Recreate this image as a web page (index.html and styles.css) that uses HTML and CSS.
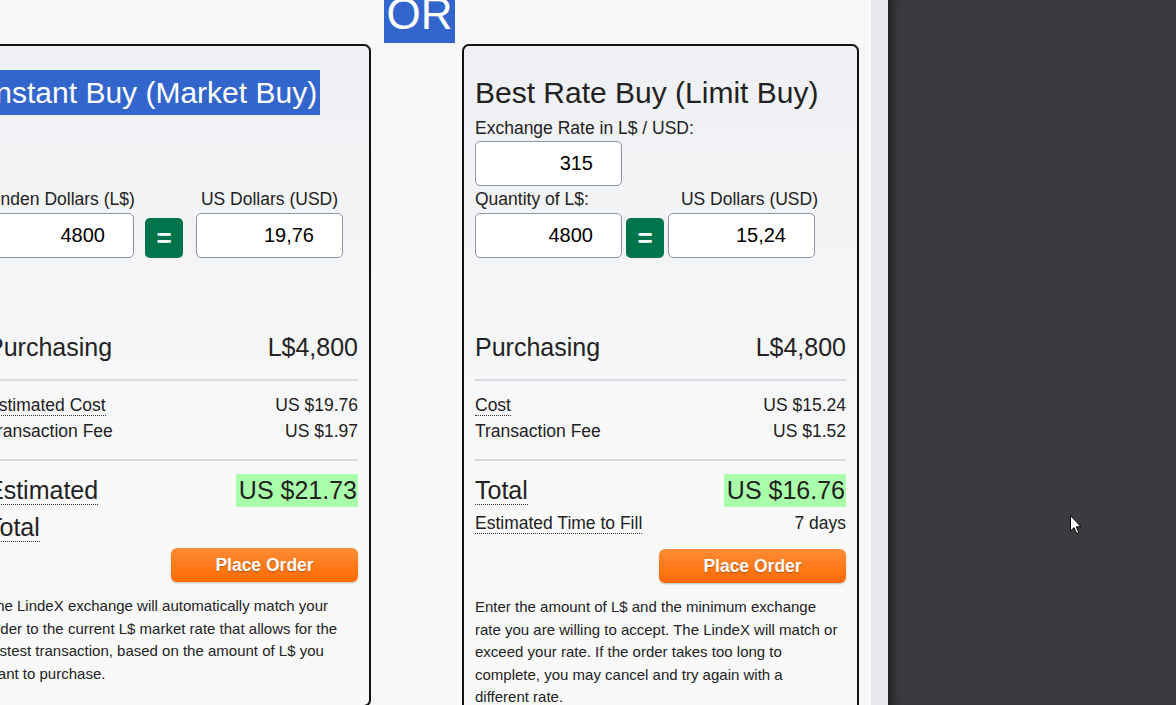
FILE: index.html
```html
<!DOCTYPE html>
<html lang="en">
<head>
  <meta charset="UTF-8" />
  <meta name="viewport" content="width=device-width, initial-scale=1" />
  <title>Buy L$ - LindeX</title>
  <link rel="stylesheet" href="styles.css">
</head>
<body>
  <div class="page">
    <div class="exchange">
      <div class="card card-market">
        <h2><span class="selected">Instant Buy (Market Buy)</span></h2>
        <div class="spacer"></div>
        <div class="field-labels centered">
          <span>Linden Dollars (L$)</span>
          <span></span>
          <span>US Dollars (USD)</span>
        </div>
        <div class="fields">
          <input class="amount" type="text" value="4800">
          <button class="equal">=</button>
          <input class="amount" type="text" value="19,76">
        </div>

        <div class="summary">
          <div class="row row-lg">
            <span>Purchasing</span>
            <span>L$4,800</span>
          </div>
          <div class="divider"></div>
          <div class="row">
            <span><span class="term">Estimated Cost</span></span>
            <span>US $19.76</span>
          </div>
          <div class="row">
            <span>Transaction Fee</span>
            <span>US $1.97</span>
          </div>
          <div class="divider"></div>
          <div class="row row-lg row-total">
            <span class="total-label"><span class="term">Estimated Total</span></span>
            <span class="total-value">US $21.73</span>
          </div>
        </div>
        <button class="place-order">Place Order</button>
        <p class="note">The LindeX exchange will automatically match your order to the current L$ market rate that allows for the fastest transaction, based on the amount of L$ you want to purchase.</p>
      </div>

      <div class="or-col">
        <div class="or">OR</div>
      </div>

      <div class="card card-limit">
        <h2>Best Rate Buy (Limit Buy)</h2>
        <div class="label">Exchange Rate in L$ / USD:</div>
        <input class="amount" type="text" value="315">
        <div class="field-labels spread">
          <span>Quantity of L$:</span>
          <span>US Dollars (USD)</span>
        </div>
        <div class="fields">
          <input class="amount" type="text" value="4800">
          <button class="equal">=</button>
          <input class="amount" type="text" value="15,24">
        </div>

        <div class="summary">
          <div class="row row-lg">
            <span>Purchasing</span>
            <span>L$4,800</span>
          </div>
          <div class="divider"></div>
          <div class="row">
            <span><span class="term">Cost</span></span>
            <span>US $15.24</span>
          </div>
          <div class="row">
            <span>Transaction Fee</span>
            <span>US $1.52</span>
          </div>
          <div class="divider"></div>
          <div class="row row-lg">
            <span><span class="term">Total</span></span>
            <span class="total-value">US $16.76</span>
          </div>
          <div class="row row-fill">
            <span><span class="term">Estimated Time to Fill</span></span>
            <span>7 days</span>
          </div>
        </div>
        <button class="place-order">Place Order</button>
        <p class="note">Enter the amount of L$ and the minimum exchange rate you are willing to accept. The LindeX will match or exceed your rate. If the order takes too long to complete, you may cancel and try again with a different rate.</p>
      </div>
    </div>
  </div>
  <div class="track"></div>
  <div class="shade"></div>

  <svg class="cursor" width="13" height="20" viewBox="0 0 13 20">
    <path d="M0.5 0.5 L0.5 16 L4 12.6 L6.6 18.6 L8.8 17.6 L6.3 11.8 L11 11.8 Z" fill="#fff" stroke="#000" stroke-width="1"/>
  </svg>
</body>
</html>
```

FILE: styles.css
```css
* {
  box-sizing: border-box;
}
body {
  margin: 0;
  height: 100vh;
  overflow: hidden;
  display: flex;
  position: relative;
  font-family: 'Liberation Sans', Arial, sans-serif;
  color: #222;
}
.page {
  width: 871px;
  flex: none;
  background: #f7f7f7;
  overflow: hidden;
}
.track {
  width: 17px;
  flex: none;
  background: #e8e8ec;
}
.shade {
  flex: 1;
  background: #3a3b3e;
  box-shadow: inset 10px 0 10px -6px rgba(0,0,0,0.5);
}
.exchange {
  display: flex;
  align-items: flex-start;
  margin-left: -26px;
}
.card {
  width: 397px;
  flex: none;
  margin-top: 44px;
  padding: 11px 11px 20px;
  border: 2px solid #111;
  border-radius: 7px;
  background: linear-gradient(#eff0f3, #f9f9fa 65%);
}
.or-col {
  width: 91px;
  flex: none;
  padding-left: 13px;
}
.or {
  width: 71px;
  height: 58px;
  margin-top: -15px;
  background: #3366cc;
  color: #fff;
  font-size: 44px;
  line-height: 58px;
  text-align: center;
}
h2 {
  margin: 13px 0 0;
  font-size: 30px;
  font-weight: normal;
  line-height: 45px;
  white-space: nowrap;
}
.selected {
  display: inline-block;
  background: #3366cc;
  color: #fff;
  padding-right: 3px;
}
.spacer {
  height: 71px;
}
.label {
  font-size: 17.5px;
  line-height: 26px;
}
.field-labels {
  font-size: 17.5px;
  line-height: 27px;
  white-space: nowrap;
}
.field-labels.centered {
  display: grid;
  grid-template-columns: 147px 38px 147px;
  column-gap: 12px;
  text-align: center;
}
.field-labels.spread {
  display: flex;
  justify-content: space-between;
  width: 343px;
}
.fields {
  display: flex;
  align-items: flex-end;
  gap: 4px;
}
.card-market .fields {
  gap: 11px;
}
.card-market .fields .equal {
  margin-right: 2px;
}
.amount {
  display: block;
  width: 147px;
  height: 45px;
  padding: 0 28px 0 6px;
  border: 1px solid #8a98a6;
  border-radius: 5px;
  background: #fff;
  font-family: inherit;
  font-size: 20px;
  color: #000;
  text-align: right;
}
.equal {
  width: 38px;
  height: 40px;
  padding: 0;
  border: none;
  border-radius: 5px;
  background: #00744b;
  color: #fff;
  font-family: inherit;
  font-size: 26px;
  font-weight: bold;
  line-height: 40px;
}
.summary {
  margin-top: 71px;
}
.row {
  display: flex;
  justify-content: space-between;
  font-size: 17.5px;
  line-height: 26px;
}
.row-lg {
  font-size: 25px;
  line-height: 36px;
}
.divider {
  height: 2px;
  margin: 14px 0 11px;
  background: #d8dbe0;
}
.divider + .row + .row + .divider {
  margin-top: 15px;
}
.term {
  border-bottom: 1px dotted #333;
}
.total-value {
  display: inline-block;
  align-self: center;
  padding: 0 1px 0 3px;
  background: #aaffaa;
  line-height: 33px;
}
.row-total {
  align-items: flex-start;
  line-height: 37px;
}
.row-total .total-label {
  width: 40%;
}
.row-total .total-value {
  align-self: flex-start;
  margin-top: 2px;
}
.row-fill {
  margin-top: 2px;
}
.place-order {
  display: block;
  width: 187px;
  height: 34px;
  margin: 13px 0 0 auto;
  border: none;
  border-radius: 6px;
  background: linear-gradient(#ff8c37, #ff6a00);
  box-shadow: 0 1px 2px rgba(0,0,0,0.25);
  color: #fff;
  font-family: inherit;
  font-size: 17.5px;
  font-weight: bold;
  text-shadow: 0 1px 1px rgba(0,0,0,0.3);
}
.card-market .place-order {
  margin-top: 2px;
}
.note {
  margin: 13px 0 0;
  padding-right: 6px;
  font-size: 15px;
  line-height: 22.6px;
}
.cursor {
  position: absolute;
  left: 1070px;
  top: 515px;
}
```
